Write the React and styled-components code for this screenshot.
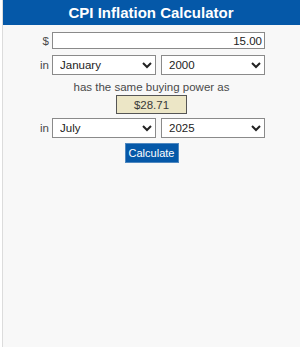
import styled, { createGlobalStyle } from 'styled-components';

const GlobalStyle = createGlobalStyle`
  body {
    margin: 0;
    background: #ffffff;
    font-family: "Liberation Sans", Arial, sans-serif;
  }
`;

function App(){
  return(
    <>
      <GlobalStyle />
      <Panel>
        <Header>CPI Inflation Calculator</Header>
        <Form>
          <Row top={7}>
            <Label>$</Label>
            <AmountInput defaultValue="15.00" />
          </Row>
          <Row top={6}>
            <Label>in</Label>
            <Selects>
              <Select defaultValue="January">
                <option>January</option>
                <option>February</option>
                <option>July</option>
              </Select>
              <Select defaultValue="2000">
                <option>2000</option>
                <option>2025</option>
              </Select>
            </Selects>
          </Row>
        </Form>
        <Caption>has the same buying power as</Caption>
        <Result>$28.71</Result>
        <Form>
          <Row top={4}>
            <Label>in</Label>
            <Selects>
              <Select defaultValue="July">
                <option>January</option>
                <option>July</option>
              </Select>
              <Select defaultValue="2025">
                <option>2000</option>
                <option>2025</option>
              </Select>
            </Selects>
          </Row>
        </Form>
        <Button>Calculate</Button>
      </Panel>
    </>
  );
};

export default App;

const Panel = styled.div`
  margin-left: 2px;
  height: 347px;
  border-left: 1px solid #dcdcdc;
  background: #f8f8f8;
  display: flex;
  flex-direction: column;
  align-items: center;
  color: #333;
`;

const Header = styled.div`
  align-self: stretch;
  height: 25px;
  background: #0558a8;
  color: #ffffff;
  font-size: 15px;
  font-weight: bold;
  display: flex;
  justify-content: center;
  align-items: center;
  padding-right: 1px;
`;

const Form = styled.div`
  display: flex;
  flex-direction: column;
  margin-right: 3px;
`;

const Row = styled.div`
  display: flex;
  align-items: center;
  gap: 3px;
  margin-top: ${ ({ top }) => top }px;
`;

const Label = styled.span`
  width: 14px;
  text-align: right;
  font-size: 11.5px;
  color: #4a4a4a;
`;

const AmountInput = styled.input`
  box-sizing: border-box;
  width: 213px;
  height: 17px;
  border: 1px solid #8a8a8a;
  background: #ffffff;
  font-family: "Liberation Sans", Arial, sans-serif;
  font-size: 11.5px;
  text-align: right;
  padding: 0 2px;
  color: #222;
`;

const Selects = styled.div`
  display: flex;
  gap: 5px;
`;

const Select = styled.select`
  box-sizing: border-box;
  width: 104px;
  height: 20px;
  border: 1px solid #8a8a8a;
  border-radius: 0;
  background: #ffffff;
  font-family: "Liberation Sans", Arial, sans-serif;
  font-size: 11.5px;
  color: #222;
  padding: 0 3px;
`;

const Caption = styled.div`
  margin-top: 5px;
  font-size: 11.5px;
  color: #4a4a4a;
  line-height: 15px;
`;

const Result = styled.div`
  box-sizing: border-box;
  width: 71px;
  height: 19px;
  border: 1px solid #555;
  background: #ece6c6;
  display: flex;
  justify-content: center;
  align-items: center;
  font-size: 11.5px;
  color: #3a3a3a;
`;

const Button = styled.button`
  box-sizing: border-box;
  margin-top: 5px;
  width: 54px;
  height: 20px;
  padding: 0;
  border: 1px solid #4f88c0;
  background: #0558a8;
  color: #ffffff;
  font-family: "Liberation Sans", Arial, sans-serif;
  font-size: 11px;
`;
